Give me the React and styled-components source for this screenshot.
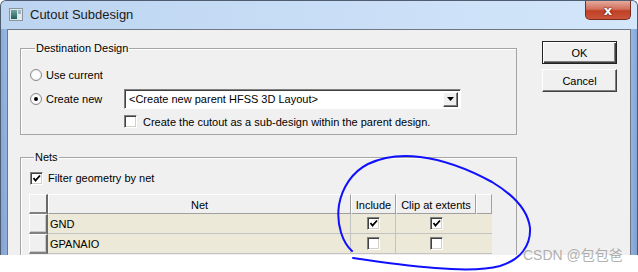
import React from "react";
import styled, { createGlobalStyle } from "styled-components";

const Global = createGlobalStyle`
  html, body {
    margin: 0;
    padding: 0;
    background: #ffffff;
  }
  body {
    font-family: "Liberation Sans", Arial, sans-serif;
    font-size: 11px;
    color: #000;
  }
`;

const Page = styled.div`
  position: relative;
  width: 638px;
  height: 272px;
  overflow: hidden;
`;

const Window = styled.div`
  width: 638px;
  height: 255px;
  box-sizing: border-box;
  overflow: hidden;
  border: 1px solid #4e5d70;
  border-bottom: none;
  border-radius: 6px 6px 0 0;
  background: linear-gradient(90deg, #b7cbe6 0px, #c8dbf2 7px, #c3d8f1 631px, #a9bde0 638px),
    linear-gradient(180deg, #c3d9f3, #b9cdea);
  background-blend-mode: multiply;
  display: flex;
  flex-direction: column;
`;

const TitleBar = styled.div`
  height: 28px;
  flex-shrink: 0;
  display: flex;
  align-items: flex-start;
  padding-left: 8px;
  background: linear-gradient(90deg, #bcd4f0 0%, #c6dcf5 40%, #d3e6fa 100%);
`;

const TitleIcon = styled.svg`
  margin-top: 7px;
  flex-shrink: 0;
`;

const TitleText = styled.span`
  margin-top: 5px;
  margin-left: 7px;
  font-size: 13px;
  line-height: 18px;
  color: #1b1b1b;
  flex: 1;
`;

const CloseBtn = styled.div`
  width: 46px;
  height: 19px;
  margin-right: 6px;
  box-sizing: border-box;
  border: 1px solid #7a2b1f;
  border-top: none;
  border-radius: 0 0 5px 5px;
  background: linear-gradient(180deg, #e6a99c 0%, #d2705c 45%, #c03f26 55%, #c9553b 100%);
  display: flex;
  align-items: center;
  justify-content: center;
  color: #fff;
  font-family: "DejaVu Sans", sans-serif;
  font-weight: bold;
  font-size: 13px;
  text-shadow: 0 0 2px #5a1308, 0 0 1px #5a1308;
`;

const Client = styled.div`
  flex: 1;
  min-height: 0;
  overflow: hidden;
  margin: 0 6px 0 6px;
  border: 1px solid #6d7785;
  border-bottom: none;
  background: #f0f0f0;
  display: flex;
  align-items: flex-start;
  padding: 12px 13px 0 12px;
  gap: 25px;
`;

const LeftCol = styled.div`
  width: 497px;
  flex-shrink: 0;
  display: flex;
  flex-direction: column;
  gap: 16px;
`;

const Group = styled.fieldset`
  margin: 0;
  padding: ${(p) => p.$pad};
  border: 1px solid #a5a5a5;
  box-shadow: inset 1px 1px 0 #fff;
  min-width: 0;
`;

const Legend = styled.legend`
  padding: 0 1px;
  margin-left: 5px;
  line-height: 13px;
  font-size: 11px;
`;

const DestGrid = styled.div`
  display: grid;
  grid-template-columns: 94px 337px;
  grid-template-rows: 20px 20px 15px;
  row-gap: 4px;
  align-items: center;
  & > :nth-child(5) {
    margin-top: 2px;
  }
`;

const Choice = styled.label`
  display: flex;
  align-items: center;
  gap: 4px;
  white-space: nowrap;
`;

const Radio = styled.span`
  width: 12px;
  height: 12px;
  box-sizing: border-box;
  border-radius: 50%;
  border: 1px solid #8a8a8a;
  background: radial-gradient(circle, #fff 40%, #e2e2e2 100%);
  display: flex;
  align-items: center;
  justify-content: center;
  &::after {
    content: "";
    width: 4px;
    height: 4px;
    border-radius: 50%;
    background: ${(p) => (p.$on ? "#000" : "transparent")};
  }
`;

const Box = styled.span`
  width: 13px;
  height: 13px;
  box-sizing: border-box;
  border-top: 1px solid #808080;
  border-left: 1px solid #808080;
  border-right: 1px solid #fff;
  border-bottom: 1px solid #fff;
  box-shadow: inset 1px 1px 0 #404040, inset -1px -1px 0 #d4d0c8;
  background: #fff;
  display: inline-flex;
  align-items: center;
  justify-content: center;
  flex-shrink: 0;
`;

const Combo = styled.div`
  height: 20px;
  box-sizing: border-box;
  border-top: 1px solid #808080;
  border-left: 1px solid #808080;
  border-right: 1px solid #fff;
  border-bottom: 1px solid #fff;
  box-shadow: inset 1px 1px 0 #404040;
  background: #fff;
  display: flex;
  align-items: center;
  padding: 0 2px 0 4px;
`;

const ComboText = styled.span`
  flex: 1;
  white-space: nowrap;
`;

const ComboBtn = styled.span`
  width: 15px;
  height: 15px;
  box-sizing: border-box;
  background: #f0f0f0;
  border-top: 1px solid #fff;
  border-left: 1px solid #fff;
  border-right: 1px solid #404040;
  border-bottom: 1px solid #404040;
  box-shadow: inset -1px -1px 0 #808080;
  display: flex;
  align-items: center;
  justify-content: center;
`;

const SubCheck = styled(Choice)`
  grid-column: 2;
  gap: 6px;
`;

const FilterRow = styled(Choice)`
  height: 14px;
  margin-left: 1px;
  gap: 5px;
`;

const Table = styled.div`
  margin-top: 9px;
  display: grid;
  grid-template-columns: 19px 303px 45px 80px 16px;
  grid-auto-rows: 20px;
  width: 463px;
`;

const HeadCell = styled.div`
  box-sizing: border-box;
  background: #f0f0f0;
  border-top: 1px solid #fff;
  border-left: 1px solid #fff;
  border-right: 1px solid #a0a0a0;
  border-bottom: 1px solid #a0a0a0;
  display: flex;
  align-items: center;
  justify-content: center;
  white-space: nowrap;
  padding-top: 1px;
`;

const RowHead = styled(HeadCell)`
  border-right: 2px solid #696969;
  border-bottom: 2px solid #808080;
  box-shadow: inset -1px -1px 0 #c8c8c8;
`;

const Corner = styled(HeadCell)`
  border-right: 2px solid #696969;
  border-bottom: 2px solid #808080;
`;

const Cell = styled.div`
  box-sizing: border-box;
  background: #ece9d8;
  border-right: ${(p) => (p.$last ? "none" : "1px solid #c3c3c3")};
  border-bottom: 1px solid #c3c3c3;
  display: flex;
  align-items: center;
  justify-content: ${(p) => (p.$center ? "center" : "flex-start")};
  padding-left: ${(p) => (p.$center ? "0" : "2px")};
  font-size: 11px;
`;

const RightCol = styled.div`
  margin-top: -1px;
  display: flex;
  flex-direction: column;
  gap: 5px;
`;

const Button = styled.div`
  width: 75px;
  height: 23px;
  box-sizing: border-box;
  background: #f0f0f0;
  border: 1px solid;
  border-color: ${(p) => (p.$def ? "#222" : "#fff #404040 #404040 #fff")};
  box-shadow: ${(p) =>
    p.$def
      ? "inset 1px 1px 0 #fff, inset -1px -1px 0 #404040, inset -2px -2px 0 #808080"
      : "inset -1px -1px 0 #808080"};
  display: flex;
  align-items: center;
  justify-content: center;
  font-size: 11px;
`;

const Ink = styled.svg`
  position: absolute;
  left: 0;
  top: 0;
  pointer-events: none;
`;

const Watermark = styled.span`
  position: absolute;
  left: 523px;
  top: 247px;
  font-family: "Liberation Sans", "Noto Sans CJK SC", sans-serif;
  font-size: 14px;
  line-height: 16px;
  color: rgba(150, 150, 150, 0.75);
  white-space: nowrap;
`;

function Check() {
  return (
    <svg width="9" height="9" viewBox="0 0 9 9">
      <polyline points="1.5,4 3.5,6.5 8,1.5" fill="none" stroke="#000" strokeWidth="1.8" />
    </svg>
  );
}

const nets = [
  { name: "GND", include: true, clip: true },
  { name: "GPANAIO", include: false, clip: false },
];

export default function App() {
  return (
    <Page>
      <Global />
      <Window>
        <TitleBar>
          <TitleIcon width="14" height="13" viewBox="0 0 14 13">
            <defs>
              <linearGradient id="ti" x1="0" y1="0" x2="0" y2="1">
                <stop offset="0" stopColor="#6fa9a0" />
                <stop offset="1" stopColor="#1f5e58" />
              </linearGradient>
            </defs>
            <rect x="0.5" y="0.5" width="13" height="12" fill="#dfe6ec" stroke="#8a949c" />
            <rect x="2" y="2" width="6" height="9" fill="url(#ti)" />
            <rect x="9" y="2" width="3" height="4" fill="#9fb3c2" />
          </TitleIcon>
          <TitleText>Cutout Subdesign</TitleText>
          <CloseBtn>x</CloseBtn>
        </TitleBar>
        <Client>
          <LeftCol>
            <Group $pad="10px 8px 6px 9px">
              <Legend>Destination Design</Legend>
              <DestGrid>
                <Choice>
                  <Radio />
                  Use current
                </Choice>
                <span />
                <Choice>
                  <Radio $on />
                  Create new
                </Choice>
                <Combo>
                  <ComboText>&lt;Create new parent HFSS 3D Layout&gt;</ComboText>
                  <ComboBtn>
                    <svg width="7" height="4" viewBox="0 0 7 4">
                      <polygon points="0,0 7,0 3.5,4" fill="#000" />
                    </svg>
                  </ComboBtn>
                </Combo>
                <SubCheck>
                  <Box />
                  Create the cutout as a sub-design within the parent design.
                </SubCheck>
              </DestGrid>
            </Group>
            <Group $pad="7px 8px 40px 8px">
              <Legend>Nets</Legend>
              <FilterRow>
                <Box>
                  <Check />
                </Box>
                Filter geometry by net
              </FilterRow>
              <Table>
                <Corner />
                <HeadCell>Net</HeadCell>
                <HeadCell>Include</HeadCell>
                <HeadCell>Clip at extents</HeadCell>
                <HeadCell />
                {nets.map((n) => (
                  <React.Fragment key={n.name}>
                    <RowHead />
                    <Cell>{n.name}</Cell>
                    <Cell $center>
                      <Box>{n.include && <Check />}</Box>
                    </Cell>
                    <Cell $center $last>
                      <Box>{n.clip && <Check />}</Box>
                    </Cell>
                    <Cell $last />
                  </React.Fragment>
                ))}
              </Table>
            </Group>
          </LeftCol>
          <RightCol>
            <Button $def>OK</Button>
            <Button>Cancel</Button>
          </RightCol>
        </Client>
      </Window>
      <Ink width="638" height="272" viewBox="0 0 638 272">
        <path
          d="M352,251 C343,243 336,225 339,205 C342,188 352,172 368,164 C385,156 405,155 420,157 C445,160 470,170 492,182 C512,194 528,210 530,228 C531,246 520,260 500,266 C485,270 460,270 435,268 C410,266 380,262 353,258"
          fill="none"
          stroke="#1010ff"
          strokeWidth="2"
          strokeLinecap="round"
        />
      </Ink>
      <Watermark>CSDN @包包爸</Watermark>
    </Page>
  );
}
